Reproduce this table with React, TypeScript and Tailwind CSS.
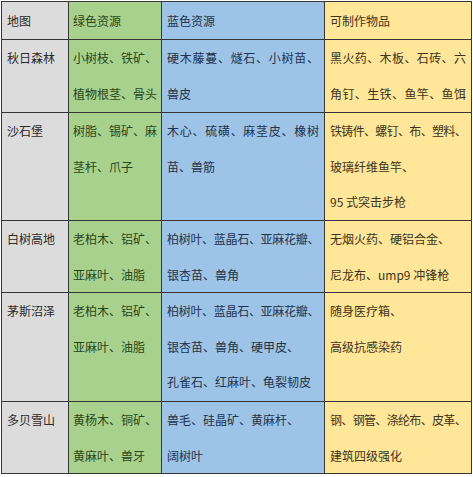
import React from "react";

type L = { t: string; c?: string };
type Row = { name: string; g: L[]; b: L[]; y: L[] };

const J = "text-justify [text-align-last:justify]";
const JC4 = "text-justify [text-align-last:justify] tracking-[-0.4px]";
const JC7 = "text-justify [text-align-last:justify] tracking-[-0.7px]";

const rows: Row[] = [
  {
    name: "秋日森林",
    g: [{ t: "小树枝、铁矿、" }, { t: "植物根茎、骨头" }],
    b: [{ t: "硬木藤蔓、燧石、小树苗、", c: J }, { t: "兽皮" }],
    y: [
      { t: "黑火药、木板、石砖、六", c: J },
      { t: "角钉、生铁、鱼竿、鱼饵", c: J },
    ],
  },
  {
    name: "沙石堡",
    g: [{ t: "树脂、锡矿、麻" }, { t: "茎杆、爪子" }],
    b: [{ t: "木心、硫磺、麻茎皮、橡树", c: J }, { t: "苗、兽筋" }],
    y: [
      { t: "铁铸件、螺钉、布、塑料、", c: JC7 },
      { t: "玻璃纤维鱼竿、" },
      { t: "95 式突击步枪" },
    ],
  },
  {
    name: "白树高地",
    g: [{ t: "老柏木、铝矿、" }, { t: "亚麻叶、油脂" }],
    b: [{ t: "柏树叶、蓝晶石、亚麻花瓣、", c: JC4 }, { t: "银杏苗、兽角" }],
    y: [{ t: "无烟火药、硬铝合金、" }, { t: "尼龙布、ump9 冲锋枪" }],
  },
  {
    name: "茅斯沼泽",
    g: [{ t: "老柏木、铝矿、" }, { t: "亚麻叶、油脂" }],
    b: [
      { t: "柏树叶、蓝晶石、亚麻花瓣、", c: JC4 },
      { t: "银杏苗、兽角、硬甲皮、" },
      { t: "孔雀石、红麻叶、龟裂韧皮" },
    ],
    y: [{ t: "随身医疗箱、" }, { t: "高级抗感染药" }],
  },
  {
    name: "多贝雪山",
    g: [{ t: "黄杨木、铜矿、" }, { t: "黄麻叶、兽牙" }],
    b: [{ t: "兽毛、硅晶矿、黄麻杆、" }, { t: "阔树叶" }],
    y: [{ t: "钢、钢管、涤纶布、皮革、", c: JC7 }, { t: "建筑四级强化" }],
  },
];

function Lines({ lines }: { lines: L[] }) {
  return (
    <>
      {lines.map((l, i) => (
        <div key={i} className={`whitespace-nowrap ${l.c ?? ""}`}>
          {l.t}
        </div>
      ))}
    </>
  );
}

export default function App() {
  const gray = "bg-[#dcdcdc] text-[#2a2a2a] px-[5px]";
  const green = "bg-[#a9d18e] text-[#27461a] px-[4px]";
  const blue = "bg-[#9dc3e6] text-[#1f334d] px-[5px]";
  const yellow = "bg-[#ffe699] text-[#3d3420] px-[5px]";
  return (
    <div className="bg-white w-[473px] h-[477px] pt-[1px] pl-[1px]">
      <div
        className="grid w-[471px] grid-cols-[66px_92px_162px_146px] grid-rows-[37px_72px_107px_71px_108px_71px] gap-px p-px bg-[#363636] text-[12px] leading-[35.7px]"
        style={{ fontFamily: '"Noto Sans CJK SC", "Noto Sans", sans-serif' }}
      >
        <div className={`${gray} pt-[1px]`}>地图</div>
        <div className={`${green} pt-[1px]`}>绿色资源</div>
        <div className={`${blue} pt-[1px]`}>蓝色资源</div>
        <div className={`${yellow} pt-[1px]`}>可制作物品</div>
        {rows.map((r) => (
          <React.Fragment key={r.name}>
            <div className={gray}>{r.name}</div>
            <div className={green}>
              <Lines lines={r.g} />
            </div>
            <div className={blue}>
              <Lines lines={r.b} />
            </div>
            <div className={yellow}>
              <Lines lines={r.y} />
            </div>
          </React.Fragment>
        ))}
      </div>
    </div>
  );
}
